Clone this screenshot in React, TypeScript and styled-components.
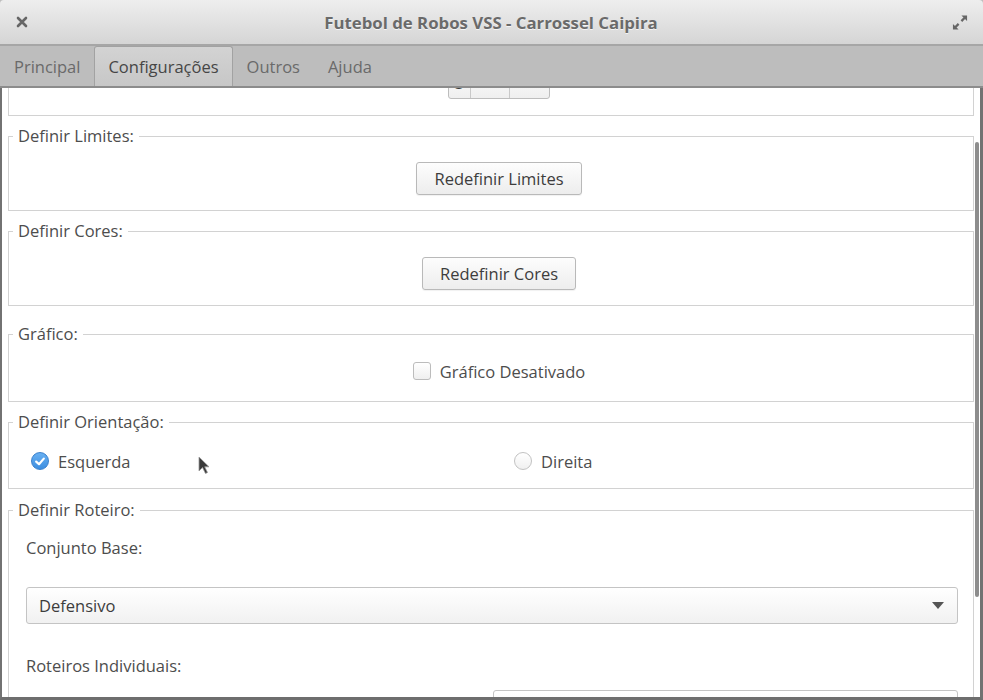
import React, { useLayoutEffect, useRef } from "react";
import styled, { createGlobalStyle } from "styled-components";

const GlobalStyle = createGlobalStyle`
  html, body { margin: 0; padding: 0; background: #fff; }
  body {
    font-family: "Open Sans", "Liberation Sans", sans-serif;
    font-size: 16.5px;
    color: #4d4d4d;
  }
  * { box-sizing: border-box; }
`;

const Window = styled.div`
  width: 983px;
  height: 700px;
  display: flex;
  flex-direction: column;
  overflow: hidden;
  background: #bdbdbd;
`;

// title bar
const TitleBar = styled.div`
  flex: none;
  height: 46px;
  display: flex;
  align-items: center;
  padding: 0 15px 0 14px;
  background: linear-gradient(#eeeeee, #d5d5d5);
  border-bottom: 2px solid #a6a6a6;
  border-radius: 4px 4px 0 0;
`;

const TitleButton = styled.div`
  width: 16px;
  height: 18px;
  display: flex;
  align-items: center;
  justify-content: center;
`;

const Title = styled.div`
  flex: 1;
  text-align: center;
  font-weight: 700;
  font-size: 16.8px;
  color: #6a6a6a;
  text-shadow: 0 1px rgba(255, 255, 255, 0.7);
`;

// tabs
const TabBar = styled.div`
  flex: none;
  height: 42px;
  display: flex;
  align-items: flex-end;
  background: #bdbdbd;
  border-bottom: 2px solid #8c8c8c;
`;

const Tab = styled.div<{ $active?: boolean }>`
  height: 40px;
  display: flex;
  align-items: center;
  padding: 0 13px;
  border: 1px solid ${(p) => (p.$active ? "#a2a2a2" : "transparent")};
  border-bottom: none;
  border-radius: 3px 3px 0 0;
  background: ${(p) => (p.$active ? "linear-gradient(#d3d3d3, #c7c7c7)" : "transparent")};
  color: ${(p) => (p.$active ? "#464646" : "#6a6a6a")};
`;

// content
const Content = styled.div`
  flex: 1;
  position: relative;
  background: #fff;
  border-left: 2px solid #727272;
  border-right: 3px solid #727272;
  border-bottom: 3px solid #6e6e6e;
  min-height: 0;
`;

const Scroller = styled.div`
  height: 100%;
  overflow: hidden;
`;

const Inner = styled.div`
  display: flex;
  flex-direction: column;
  gap: 10px;
  padding: 10px 6px 60px 6px;
`;

const Frame = styled.fieldset<{ $mt?: number }>`
  margin: ${(p) => p.$mt ?? 0}px 0 0 0;
  padding: 0;
  min-width: 0;
  border: 1px solid #d2d2d2;
`;

const Legend = styled.legend`
  margin-left: 4px;
  padding: 0 5px;
  line-height: 20px;
  color: #4d4d4d;
`;

const Body = styled.div<{ $pad: string; $center?: boolean }>`
  padding: ${(p) => p.$pad};
  display: flex;
  flex-direction: column;
  align-items: ${(p) => (p.$center ? "center" : "stretch")};
`;

const Button = styled.div`
  height: 33px;
  display: flex;
  align-items: center;
  padding: 0 17px;
  border: 1px solid #b9b9b9;
  border-radius: 3px;
  background: linear-gradient(#fdfdfd, #ededed);
  box-shadow: 0 1px 1px rgba(0, 0, 0, 0.06);
  color: #3d3d3d;
`;

const Spin = styled.div`
  display: flex;
  height: 33px;
  border: 1px solid #bdbdbd;
  border-radius: 3px;
  background: linear-gradient(#fdfdfd, #efefef);
`;

const SpinCell = styled.div<{ $w: number }>`
  width: ${(p) => p.$w}px;
  display: flex;
  align-items: center;
  justify-content: center;
  color: #3d3d3d;
  & + & { border-left: 1px solid #c9c9c9; }
`;

const Row = styled.div`
  height: 22px;
  display: flex;
  align-items: center;
  gap: 9px;
  color: #4d4d4d;
`;

const CheckBox = styled.div`
  width: 18px;
  height: 18px;
  border: 1px solid #bcbcbc;
  border-radius: 3px;
  background: linear-gradient(#ffffff, #efefef);
`;

const Radio = styled.div<{ $on?: boolean }>`
  width: 18px;
  height: 18px;
  border-radius: 50%;
  display: flex;
  align-items: center;
  justify-content: center;
  border: 1px solid ${(p) => (p.$on ? "#3a80cc" : "#c2c2c2")};
  background: ${(p) => (p.$on ? "linear-gradient(#68b0f2, #3d8ee0)" : "linear-gradient(#ffffff, #f0f0f0)")};
`;

const RadioGrid = styled.div`
  display: grid;
  grid-template-columns: 483px 1fr;
`;

const FieldLabel = styled.div<{ $mb: number }>`
  height: 22px;
  line-height: 22px;
  margin-bottom: ${(p) => p.$mb}px;
  color: #4d4d4d;
`;

const Combo = styled.div<{ $mb?: number }>`
  height: 37px;
  display: flex;
  align-items: center;
  justify-content: space-between;
  padding: 0 13px 0 12px;
  margin-bottom: ${(p) => p.$mb ?? 0}px;
  border: 1px solid #c4c4c4;
  border-radius: 3px;
  background: linear-gradient(#ffffff, #f1f1f1);
  color: #3d3d3d;
`;

const ComboGrid = styled.div`
  display: grid;
  grid-template-columns: 467px 1fr;
`;

const ScrollThumb = styled.div`
  position: absolute;
  right: 1px;
  top: 54px;
  width: 4px;
  height: 455px;
  border-radius: 2px;
  background: #8d8d8d;
`;

const Pointer = styled.svg`
  position: absolute;
  left: 196px;
  top: 368px;
`;

const Arrow = () => (
  <svg width="12" height="7" viewBox="0 0 12 7">
    <path d="M0 0 H12 L6 7 Z" fill="#555" />
  </svg>
);

const App = () => {
  const scrollRef = useRef<HTMLDivElement>(null);

  // the view is scrolled a little down
  useLayoutEffect(() => {
    if (scrollRef.current) scrollRef.current.scrollTop = 49;
  }, []);

  return (
    <Window>
      <GlobalStyle />
      <TitleBar>
        <TitleButton>
          <svg width="12" height="12" viewBox="0 0 12 12">
            <path d="M2 2 L10 10 M10 2 L2 10" stroke="#666" strokeWidth="2.6" strokeLinecap="round" />
          </svg>
        </TitleButton>
        <Title>Futebol de Robos VSS - Carrossel Caipira</Title>
        <TitleButton>
          <svg width="17" height="17" viewBox="0 0 17 17">
            <path d="M10 1 H16 V7 Z" fill="#666" />
            <path d="M1 10 V16 H7 Z" fill="#666" />
            <path d="M13.5 3.5 L10 7 M3.5 13.5 L7 10" stroke="#666" strokeWidth="2.4" />
          </svg>
        </TitleButton>
      </TitleBar>

      <TabBar>
        <Tab>Principal</Tab>
        <Tab $active>Configurações</Tab>
        <Tab>Outros</Tab>
        <Tab>Ajuda</Tab>
      </TabBar>

      <Content>
        <Scroller ref={scrollRef}>
          <Inner>
            <Frame>
              <Body $pad="16px 8px 16px 24px" $center>
                <Spin>
                  <SpinCell $w={21}>3</SpinCell>
                  <SpinCell $w={39}>
                    <svg width="10" height="10" viewBox="0 0 10 10">
                      <path d="M0 5 H10" stroke="#555" strokeWidth="2" />
                    </svg>
                  </SpinCell>
                  <SpinCell $w={40}>
                    <svg width="10" height="10" viewBox="0 0 10 10">
                      <path d="M0 5 H10 M5 0 V10" stroke="#555" strokeWidth="2" />
                    </svg>
                  </SpinCell>
                </Spin>
              </Body>
            </Frame>

            <Frame>
              <Legend>Definir Limites:</Legend>
              <Body $pad="16px 8px 15px 24px" $center>
                <Button>Redefinir Limites</Button>
              </Body>
            </Frame>

            <Frame>
              <Legend>Definir Cores:</Legend>
              <Body $pad="16px 8px 15px 24px" $center>
                <Button>Redefinir Cores</Button>
              </Body>
            </Frame>

            <Frame $mt={8}>
              <Legend>Gráfico:</Legend>
              <Body $pad="16px 8px 19px 24px" $center>
                <Row>
                  <CheckBox />
                  Gráfico Desativado
                </Row>
              </Body>
            </Frame>

            <Frame>
              <Legend>Definir Orientação:</Legend>
              <Body $pad="18px 8px 16px 22px">
                <RadioGrid>
                  <Row>
                    <Radio $on>
                      <svg width="10" height="9" viewBox="0 0 10 9">
                        <path d="M1.2 4.6 L4 7.2 L8.8 1.6" stroke="#fff" strokeWidth="2.2" fill="none" strokeLinecap="round" strokeLinejoin="round" />
                      </svg>
                    </Radio>
                    Esquerda
                  </Row>
                  <Row>
                    <Radio />
                    Direita
                  </Row>
                </RadioGrid>
              </Body>
            </Frame>

            <Frame $mt={1}>
              <Legend>Definir Roteiro:</Legend>
              <Body $pad="17px 15px 20px 17px">
                <FieldLabel $mb={28}>Conjunto Base:</FieldLabel>
                <Combo $mb={31}>
                  Defensivo
                  <Arrow />
                </Combo>
                <FieldLabel $mb={13}>Roteiros Individuais:</FieldLabel>
                <ComboGrid>
                  <div />
                  <Combo>
                    <span />
                    <Arrow />
                  </Combo>
                </ComboGrid>
              </Body>
            </Frame>
          </Inner>
        </Scroller>
        <ScrollThumb />
        <Pointer width="12" height="19" viewBox="0 0 12 19">
          <path d="M1 1 L1 15 L4.5 11.5 L7.5 17.5 L9.5 16.5 L6.7 10.8 L11 10.8 Z" fill="#3a3a3a" stroke="#9a9a9a" strokeWidth="0.8" />
        </Pointer>
      </Content>
    </Window>
  );
};

export default App;
